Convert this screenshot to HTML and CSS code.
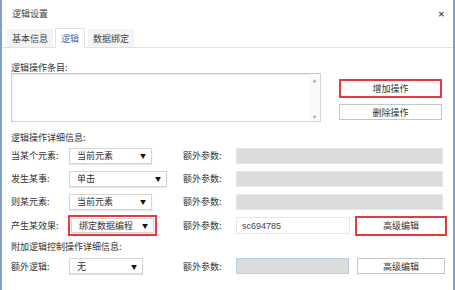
FILE: index.html
```html
<!DOCTYPE html>
<html lang="zh-CN">
<head>
  <meta charset="UTF-8">
  <title>逻辑设置</title>
  <link rel="stylesheet" href="styles.css">
</head>
<body>
  <div class="dialog">
    <div class="titlebar">
      <span class="title">逻辑设置</span>
      <span class="close">✕</span>
    </div>

    <div class="tabs">
      <span class="tab">基本信息</span>
      <span class="tab active">逻辑</span>
      <span class="tab">数据绑定</span>
    </div>

    <div class="content">
      <div class="section-label first">逻辑操作条目:</div>
      <div class="items">
        <div class="listbox">
          <div class="scroll"><span>▲</span><span>▼</span></div>
        </div>
        <div class="item-buttons">
          <button class="btn add marked">增加操作</button>
          <button class="btn remove">删除操作</button>
        </div>
      </div>

      <div class="section-label">逻辑操作详细信息:</div>
      <div class="form-grid">
        <span class="label">当某个元素:</span>
        <div class="select w83">当前元素<span class="arrow">▼</span></div>
        <span class="label">额外参数:</span>
        <div class="input disabled full"></div>

        <span class="label">发生某事:</span>
        <div class="select w98">单击<span class="arrow">▼</span></div>
        <span class="label">额外参数:</span>
        <div class="input disabled full"></div>

        <span class="label">则某元素:</span>
        <div class="select w83">当前元素<span class="arrow">▼</span></div>
        <span class="label">额外参数:</span>
        <div class="input disabled full"></div>

        <span class="label">产生某效果:</span>
        <div class="select w83 marked-select">绑定数据编程<span class="arrow">▼</span></div>
        <span class="label">额外参数:</span>
        <div class="param">
          <div class="input value">sc694785</div>
          <button class="btn edit marked">高级编辑</button>
        </div>
      </div>

      <div class="section-label extra">附加逻辑控制操作详细信息:</div>
      <div class="form-grid last">
        <span class="label">额外逻辑:</span>
        <div class="select w74">无<span class="arrow">▼</span></div>
        <span class="label">额外参数:</span>
        <div class="param">
          <div class="input disabled blue"></div>
          <button class="btn edit plain">高级编辑</button>
        </div>
      </div>
    </div>
  </div>
</body>
</html>
```

FILE: styles.css
```css
body {
  margin: 0;
  font-family: "Noto Sans CJK SC", "Liberation Sans", sans-serif;
  font-size: 9px;
  color: #333;
  background: #fff;
}
.dialog {
  width: 455px;
  height: 290px;
  box-sizing: border-box;
  border-left: 2px solid #7f9fd1;
  border-right: 2px solid #7f9fd1;
  background: #fff;
  overflow: hidden;
}
.titlebar {
  height: 27px;
  display: flex;
  align-items: center;
  justify-content: space-between;
  padding: 0 8px 0 10px;
}
.title {
  color: #444;
}
.close {
  font-size: 8px;
  font-weight: bold;
  color: #555;
}
.tabs {
  display: flex;
  gap: 2px;
  margin-top: 2px;
  padding-left: 5px;
  height: 18px;
  border-bottom: 1px solid #e2e2e2;
}
.tab {
  display: flex;
  align-items: center;
  padding: 0 5px;
  height: 18px;
  background: #f4f4f4;
  color: #444;
}
.tab.active {
  background: #fff;
  color: #3b6cb7;
  border: 1px solid #e2e2e2;
  border-bottom-color: #fff;
  height: 18px;
  padding: 0 5px;
  margin-top: -1px;
}
.tab + .tab.active + .tab {
  margin-left: 1px;
}
.content {
  padding: 0 6px 0 9px;
}
.section-label {
  line-height: 12px;
  margin-top: 10px;
}
.section-label.first {
  margin-top: 14px;
  line-height: 11px;
}
.section-label.extra {
  margin-top: 5px;
}
.items {
  display: flex;
  align-items: flex-start;
}
.listbox {
  width: 310px;
  height: 49px;
  box-sizing: border-box;
  border: 1px solid #d4d4d4;
  border-top-color: #c4c4c4;
  box-shadow: inset 1px 1px 1px #ececec;
  display: flex;
  justify-content: flex-end;
}
.scroll {
  width: 11px;
  display: flex;
  flex-direction: column;
  justify-content: space-between;
  align-items: center;
  font-size: 4px;
  color: #aaa;
  padding: 4px 0 1px;
  background: #fafafa;
}
.item-buttons {
  display: flex;
  flex-direction: column;
  gap: 6px;
  margin: 6px 0 0 18px;
}
.btn {
  font-family: inherit;
  font-size: 9px;
  color: #333;
  background: #fff;
  border: 1px solid #c6c6c6;
  padding: 0;
  box-sizing: border-box;
  display: flex;
  align-items: center;
  justify-content: center;
}
.btn.add {
  width: 103px;
  height: 19px;
}
.btn.remove {
  width: 103px;
  height: 16px;
}
.btn.marked {
  border: 2px solid #e8393f;
}
.form-grid {
  display: grid;
  grid-template-columns: 58px 114px 53px 211px;
  grid-auto-rows: 23px;
  align-items: center;
}
.form-grid .label:nth-child(13),
.form-grid .label:nth-child(13) ~ * {
  margin-top: 2px;
}
.form-grid.last {
  grid-auto-rows: 22px;
  margin-top: 2px;
}
.label {
  white-space: nowrap;
}
.select {
  height: 16px;
  box-sizing: border-box;
  border: 1px solid #d6d6d6;
  box-shadow: 0 1px 1px #e6e6e6;
  background: #fff;
  display: flex;
  align-items: center;
  justify-content: space-between;
  padding: 0 5px 0 7px;
}
.arrow {
  font-size: 6px;
  color: #111;
}
.w83 { width: 83px; }
.w98 { width: 98px; }
.w74 { width: 74px; }
.marked-select {
  margin-left: 2px;
  height: 15px;
  outline: 2px solid #e8393f;
  outline-offset: 1px;
}
.input {
  height: 16px;
  box-sizing: border-box;
  border: 1px solid #e6e6e6;
}
.input.disabled {
  background: #dcdcdc;
}
.input.full {
  width: 207px;
}
.input.blue {
  width: 113px;
  border-color: #bccde6;
}
.input.value {
  width: 114px;
  height: 17px;
  display: flex;
  align-items: center;
  padding-left: 5px;
  font-family: "Liberation Sans", sans-serif;
  color: #444;
}
.param {
  display: flex;
  align-items: center;
}
.btn.edit {
  height: 20px;
  width: 92px;
  margin-left: 5px;
}
.btn.plain {
  width: 88px;
  height: 16px;
  margin-left: 8px;
}
```
